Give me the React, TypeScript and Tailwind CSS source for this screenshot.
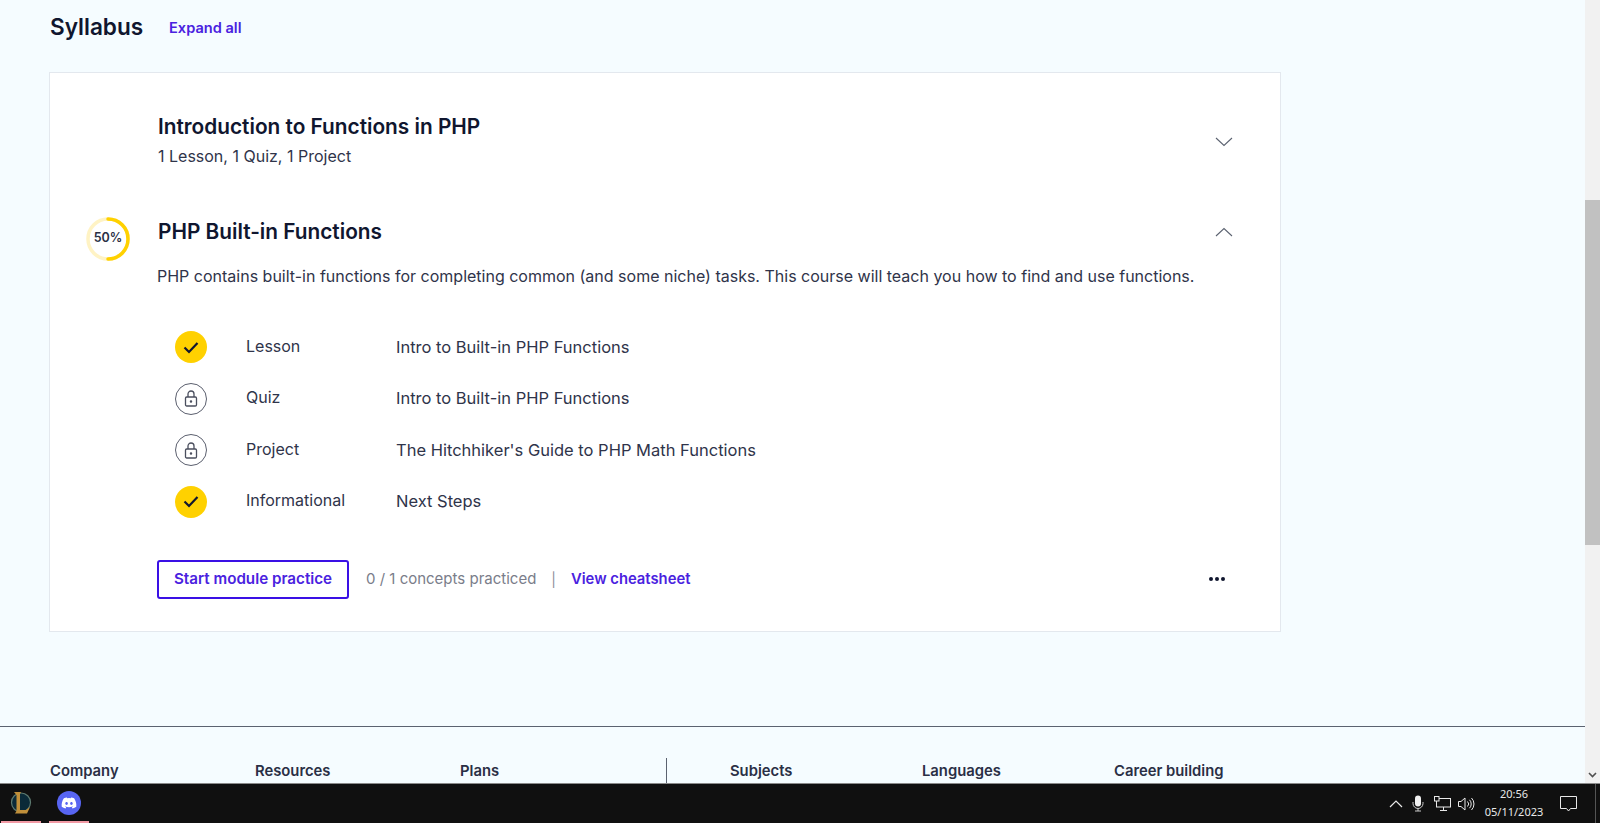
import { FaDiscord } from "react-icons/fa";

const FONT = "font-['Inter','Noto_Sans',sans-serif]";

type Item = { done: boolean; kind: string; title: string };

const ITEMS: Item[] = [
  { done: true, kind: "Lesson", title: "Intro to Built-in PHP Functions" },
  { done: false, kind: "Quiz", title: "Intro to Built-in PHP Functions" },
  { done: false, kind: "Project", title: "The Hitchhiker's Guide to PHP Math Functions" },
  { done: true, kind: "Informational", title: "Next Steps" },
];

const FOOTER_LEFT = [
  { name: "Company", w: "w-[205px]" },
  { name: "Resources", w: "w-[205px]" },
  { name: "Plans", w: "w-[206px]" },
];

const FOOTER_RIGHT = [
  { name: "Subjects", w: "w-[192px]" },
  { name: "Languages", w: "w-[192px]" },
  { name: "Career building", w: "w-[180px]" },
];

function Chevron({ up }: { up?: boolean }) {
  return (
    <svg width="18" height="10" viewBox="0 0 18 10" fill="none" stroke="#5b6270" strokeWidth="1.1">
      <path d={up ? "M1 9 L9 1.5 L17 9" : "M1 1 L9 8.5 L17 1"} />
    </svg>
  );
}

function StatusIcon({ done }: { done: boolean }) {
  if (done) {
    return (
      <div className="w-8 h-8 rounded-full bg-[#ffd100] flex items-center justify-center">
        <svg width="16" height="13" viewBox="0 0 16 13" fill="none" stroke="#10162f" strokeWidth="2.2">
          <path d="M1.5 6.5 L6 11 L14.5 2" />
        </svg>
      </div>
    );
  }
  return (
    <div className="w-8 h-8 rounded-full border-[1.5px] border-[#5b5f6e] flex items-center justify-center">
      <svg width="14" height="17" viewBox="0 0 14 17" fill="none" stroke="#4b4f5e" strokeWidth="1.3">
        <rect x="1.5" y="7" width="11" height="9" rx="1.2" />
        <path d="M4 7 V4 a3 3 0 0 1 6 0 V7" />
        <circle cx="7" cy="11.5" r="0.6" fill="#4b4f5e" />
      </svg>
    </div>
  );
}

function ProgressRing() {
  return (
    <div className="relative w-11 h-11 flex items-center justify-center">
      <svg width="44" height="44" viewBox="0 0 44 44" fill="none" className="absolute inset-0">
        <circle cx="22" cy="22" r="20" stroke="#fff3c4" strokeWidth="3.5" />
        <path d="M22 2 A20 20 0 0 1 22 42" stroke="#ffd100" strokeWidth="3.5" strokeLinecap="round" />
      </svg>
      <span className="relative text-[12.5px] font-semibold text-[#2a2f45] -mt-[2px]">50%</span>
    </div>
  );
}

function LeagueLogo() {
  return (
    <svg width="22" height="24" viewBox="0 0 22 24" fill="none">
      <circle cx="11" cy="11.5" r="9.5" fill="#0b2a38" stroke="#5d7a70" strokeWidth="1.2" />
      <path d="M4 1 H11 L10 3 V19 H16 L20 16 L17 22.5 H5 L6.5 20 V4 Z" fill="#c08f3a" />
    </svg>
  );
}

function TrayIcons() {
  return (
    <div className="flex items-center text-white">
      <svg width="14" height="8" viewBox="0 0 14 8" fill="none" stroke="#e8e8e8" strokeWidth="1.2" className="mr-[9px]">
        <path d="M1 7 L7 1 L13 7" />
      </svg>
      <svg width="12" height="17" viewBox="0 0 12 17" fill="none" className="mr-[10px]">
        <rect x="3" y="0.5" width="6" height="11" rx="3" fill="#f0f0f0" />
        <path d="M1 7 V8.5 a5 5 0 0 0 10 0 V7 M6 13.5 V16 M3 16 H9" stroke="#c8c8c8" strokeWidth="1" />
      </svg>
      <svg width="17" height="15" viewBox="0 0 17 15" fill="none" stroke="#e8e8e8" strokeWidth="1" className="mr-[7px]">
        <rect x="2.5" y="2.5" width="14" height="8.5" fill="#111" />
        <rect x="0.5" y="0.5" width="4.5" height="4.5" fill="#111" />
        <path d="M9.5 11 V14 M6 14.5 H13" />
      </svg>
      <svg width="17" height="14" viewBox="0 0 17 14" fill="none" stroke="#e8e8e8" strokeWidth="1">
        <path d="M0.5 4.5 H3 L7 1 V13 L3 9.5 H0.5 Z M9.5 4.5 a3.5 3.5 0 0 1 0 5 M11.5 2.8 a6 6 0 0 1 0 8.4 M13.5 1 a8.5 8.5 0 0 1 0 12" />
      </svg>
    </div>
  );
}

export default function App() {
  return (
    <div className={`${FONT} w-[1600px] h-[823px] flex flex-col overflow-hidden bg-[#f5fcff] text-[#10162f]`}>
      <div className="flex flex-1 min-h-0">
        <main className="flex-1 min-w-0 flex flex-col">
          <div className="pl-[49px] pt-[11px] w-[1281px] box-content">
            <div className="flex items-center h-[32px] pl-px">
              <h2 className="text-[22.6px] font-semibold leading-8 w-[119px]">Syllabus</h2>
              <a className="text-[14.6px] font-semibold text-[#4a22e0] mt-[3px]">Expand all</a>
            </div>

            <section className="mt-[29px] w-[1232px] h-[560px] bg-white border border-[#e3e8ee] pt-[40px]">
              <div className="flex pl-[108px] pr-[47px] h-[59px]">
                <div className="flex-1">
                  <h3 className="text-[20.8px] font-semibold leading-7">Introduction to Functions in PHP</h3>
                  <p className="text-[16px] leading-6 mt-[3px] text-[#2f344a]">1 Lesson, 1 Quiz, 1 Project</p>
                </div>
                <div className="mt-[24px]">
                  <Chevron />
                </div>
              </div>

              <div className="flex items-center pl-[36px] pr-[47px] mt-[45px] h-[44px]">
                <ProgressRing />
                <h3 className="text-[20.8px] font-semibold leading-7 ml-[28px] flex-1 -mt-[15px]">PHP Built-in Functions</h3>
                <div className="-mt-[14px]">
                  <Chevron up />
                </div>
              </div>

              <p className="pl-[107px] mt-[3px] text-[16px] leading-6 text-[#2f344a]">
                PHP contains built-in functions for completing common (and some niche) tasks. This course will teach you how to find and use functions.
              </p>

              <ul className="mt-[43px] pl-[125px] flex flex-col gap-[19.5px]">
                {ITEMS.map((item) => (
                  <li key={item.kind} className="flex items-center h-8 text-[16px] text-[#2f344a]">
                    <StatusIcon done={item.done} />
                    <span className="ml-[39px] w-[150px] -mt-[3px]">{item.kind}</span>
                    <span className="text-[16.5px]">{item.title}</span>
                  </li>
                ))}
              </ul>

              <div className="flex items-center pl-[107px] pr-[55px] mt-[42px]">
                <button className="w-[192px] h-[39px] rounded-[3px] border-2 border-[#3a10e5] text-[15.2px] font-semibold text-[#4a22e0]">
                  Start module practice
                </button>
                <span className="ml-[17px] text-[15px] text-[#7a7d8a]">0 / 1 concepts practiced</span>
                <span className="ml-[15px] text-[14px] text-[#8a8d99]">|</span>
                <a className="ml-[15px] text-[14.8px] font-semibold text-[#4a22e0]">View cheatsheet</a>
                <div className="ml-auto flex gap-[2px]">
                  <span className="w-1 h-1 rounded-full bg-[#10162f]" />
                  <span className="w-1 h-1 rounded-full bg-[#10162f]" />
                  <span className="w-1 h-1 rounded-full bg-[#10162f]" />
                </div>
              </div>
            </section>
          </div>

          <footer className="mt-[94px] border-t border-[#5b6270] pl-[50px] pt-[34px] flex items-start flex-1 min-h-0">
            {FOOTER_LEFT.map((col) => (
              <div key={col.name} className={`${col.w} text-[14.8px] font-semibold leading-5 text-[#2a2f45]`}>
                {col.name}
              </div>
            ))}
            <div className="w-px h-[26px] -mt-[3px] bg-[#5b6270] mr-[63px]" />
            {FOOTER_RIGHT.map((col) => (
              <div key={col.name} className={`${col.w} text-[14.8px] font-semibold leading-5 text-[#2a2f45]`}>
                {col.name}
              </div>
            ))}
          </footer>
        </main>

        <div className="w-[15px] bg-[#f1f1f1] flex flex-col">
          <div className="mt-[200px] h-[345px] bg-[#c1c1c1]" />
          <div className="mt-auto h-[17px] flex items-center justify-center">
            <svg width="9" height="6" viewBox="0 0 9 6" fill="none" stroke="#505050" strokeWidth="1.6">
              <path d="M1 1 L4.5 4.5 L8 1" />
            </svg>
          </div>
        </div>
      </div>

      <div className="relative h-[40px] bg-[#101010] border-t border-[#8a8a8a] flex items-center font-['Noto_Sans',sans-serif]">
        <div className="w-[41px] flex justify-center -mt-[1px]">
          <LeagueLogo />
        </div>
        <div className="ml-[16px] w-6 h-6 rounded-full bg-[#5865f2] flex items-center justify-center -mt-[1px]">
          <FaDiscord className="w-4 h-4 text-white" />
        </div>
        <div className="absolute left-px bottom-0 w-[40px] h-[2px] bg-[#f29aa5]" />
        <div className="absolute left-[49px] bottom-0 w-[40px] h-[2px] bg-[#f29aa5]" />
        <div className="ml-auto flex items-center">
          <TrayIcons />
          <div className="w-[70px] ml-[4px] text-center text-[11px] leading-[18px] text-[#e8e8e8] -mt-[1px]">
            <div>20:56</div>
            <div>05/11/2023</div>
          </div>
          <svg width="17" height="16" viewBox="0 0 17 16" fill="none" stroke="#e8e8e8" strokeWidth="1" className="ml-[11px] mr-[18px]">
            <path d="M0.5 0.5 H16.5 V12.5 H10.5 L8.5 15 L6.5 12.5 H0.5 Z" />
          </svg>
          <div className="w-px h-[39px] bg-[#555] mr-[4px]" />
        </div>
      </div>
    </div>
  );
}
